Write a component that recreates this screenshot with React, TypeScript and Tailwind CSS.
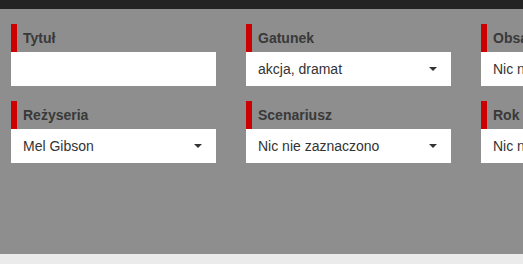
import React from 'react';

type Field = {
  label: string;
  value?: string;
  select?: boolean;
};

const fields: Field[] = [
  { label: 'Tytuł' },
  { label: 'Gatunek', value: 'akcja, dramat', select: true },
  { label: 'Obsada', value: 'Nic nie zaznaczono', select: true },
  { label: 'Reżyseria', value: 'Mel Gibson', select: true },
  { label: 'Scenariusz', value: 'Nic nie zaznaczono', select: true },
  { label: 'Rok produkcji', value: 'Nic nie zaznaczono', select: true },
];

function FilterField({ label, value, select }: Field) {
  return (
    <div className="flex w-[205px] flex-col">
      {/* Label with red accent */}
      <div className="h-[28px] border-l-[6px] border-[#cc0000] pl-[6px] text-[14px] leading-[28px] font-bold whitespace-nowrap text-[#393939]">
        {label}
      </div>
      {/* Input / select */}
      <div className="flex h-[34px] items-center justify-between bg-white pr-[14px] pl-[12px] text-[14px] whitespace-nowrap text-[#333]">
        <span>{value ?? ''}</span>
        {select && (
          <span className="h-0 w-0 border-x-[4px] border-t-[4px] border-x-transparent border-t-[#333]" />
        )}
      </div>
    </div>
  );
}

export default function App() {
  return (
    <div
      className="flex h-[264px] w-[523px] flex-col overflow-hidden"
      style={{ fontFamily: '"Liberation Sans", Arial, sans-serif' }}
    >
      <div className="h-[9px] shrink-0 bg-[#232323]" />
      <div className="flex-1 bg-[#8e8e8e] px-[11px] pt-[15px]">
        <div className="grid w-max grid-cols-[205px_205px_205px] gap-x-[30px] gap-y-[15px]">
          {fields.map((f) => (
            <FilterField key={f.label} {...f} />
          ))}
        </div>
      </div>
      <div className="h-[10px] shrink-0 bg-[#ebebeb]" />
    </div>
  );
}
